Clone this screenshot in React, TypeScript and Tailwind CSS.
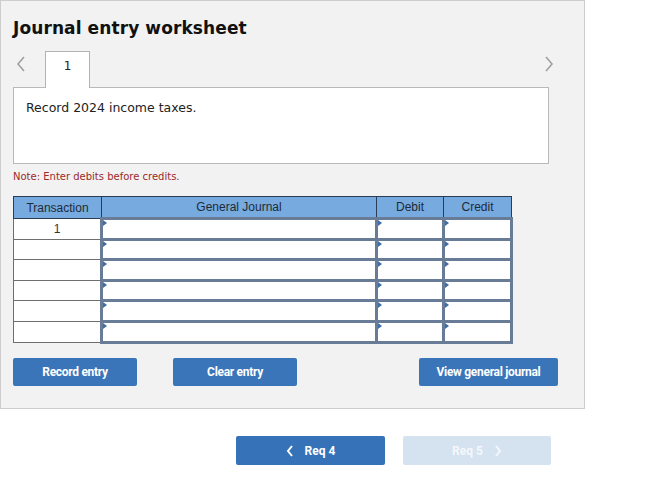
import React from 'react'

/**
 * Journal entry worksheet
 * - 분개 입력 표 + 하단 요구사항 이동 버튼
 */

const rows = ['1', '', '', '', '', '']

function Marker() {
    return (
        <span className="absolute left-0 top-0 w-0 h-0 border-y-[3px] border-y-transparent border-l-[4px] border-l-[#3d6ea8]" />
    )
}

function Chevron({ dir, className, w = 8, h = 12, sw = 2 }: { dir: 'left' | 'right'; className?: string; w?: number; h?: number; sw?: number }) {
    return (
        <svg width={w} height={h} viewBox={`0 0 ${w} ${h}`} className={className}>
            <path
                d={dir === 'left' ? `M${w - 2} 1 L2 ${h / 2} L${w - 2} ${h - 1}` : `M2 1 L${w - 2} ${h / 2} L2 ${h - 1}`}
                fill="none"
                stroke="currentColor"
                strokeWidth={sw}
            />
        </svg>
    )
}

export default function App() {
    return (
        <div className="w-[652px] h-[478px] bg-white relative font-['DejaVu_Sans',sans-serif]">
            <div className="w-[585px] h-[409px] bg-[#f2f2f2] border border-[#cdcdcd] pt-[17px] px-[12px]">
                <h1 className="text-[17px] font-bold text-[#111] leading-[20px] tracking-[0.1px]">Journal entry worksheet</h1>

                <div className="flex items-end h-[36px] mt-[13px] relative">
                    <div className="w-[32px] h-[36px] pl-[3px] pt-[5px] text-[#a0a0a0]">
                        <Chevron dir="left" w={10} h={16} sw={1.6} />
                    </div>
                    <div className="w-[45px] h-[37px] bg-white border border-[#b3b3b3] border-b-0 relative z-10 -mb-px flex justify-center pt-[5px] text-[12px] text-[#222]">
                        1
                    </div>
                    <div className="absolute right-[18px] top-[5px] text-[#a0a0a0]">
                        <Chevron dir="right" w={10} h={16} sw={1.6} />
                    </div>
                </div>

                <div className="w-[536px] h-[77px] bg-white border border-[#b9b9b9] px-[12px] pt-[11px] text-[12.5px] text-[#222]">
                    Record 2024 income taxes.
                </div>

                <p className="mt-[6px] text-[10px] text-[#9b2a2a] leading-[14px] font-['DejaVu_Sans',sans-serif]">Note: Enter debits before credits.</p>

                <table className="mt-[12px] border-collapse font-['Liberation_Sans',Arial,sans-serif] text-[12px]">
                    <thead>
                        <tr className="h-[22px] bg-[#77aadf] text-[#1e2a38]">
                            <th className="w-[88px] border border-[#2a3d56] font-normal p-0">Transaction</th>
                            <th className="w-[275px] border border-[#2a3d56] font-normal p-0">General Journal</th>
                            <th className="w-[67px] border border-[#2a3d56] font-normal p-0">Debit</th>
                            <th className="w-[68px] border border-[#2a3d56] font-normal p-0">Credit</th>
                        </tr>
                    </thead>
                    <tbody>
                        {rows.map((t, i) => (
                            <tr key={i} className="h-[20.6px]">
                                <td className="bg-white border border-[#6e6e6e] text-center text-[#333] p-0">{t}</td>
                                <td className="relative bg-white border-[3px] border-[#687c97] p-0"><Marker /></td>
                                <td className="relative bg-white border-[3px] border-[#687c97] p-0"><Marker /></td>
                                <td className="relative bg-white border-[3px] border-[#687c97] p-0"><Marker /></td>
                            </tr>
                        ))}
                    </tbody>
                </table>

                <div className="flex mt-[14px] font-['Roboto',sans-serif] text-[12px] font-bold text-white tracking-[-0.3px]">
                    <button className="w-[124px] h-[28px] bg-[#3a75ba] rounded-[2px]">Record entry</button>
                    <button className="w-[124px] h-[28px] bg-[#3a75ba] rounded-[2px] ml-[36px]">Clear entry</button>
                    <button className="w-[139px] h-[28px] bg-[#3a75ba] rounded-[2px] ml-auto mr-[14px]">View general journal</button>
                </div>
            </div>

            <div className="flex mt-[27px] ml-[236px] gap-[18px] font-['Roboto',sans-serif] text-[12px] font-bold">
                <button className="w-[149px] h-[29px] bg-[#3572b8] rounded-[2px] text-white flex items-center justify-center gap-[11px]">
                    <Chevron dir="left" />
                    <span>Req 4</span>
                </button>
                <button className="w-[148px] h-[29px] bg-[#d5e2f0] rounded-[2px] text-[#f4f7fb] flex items-center justify-center gap-[11px]">
                    <span>Req 5</span>
                    <Chevron dir="right" />
                </button>
            </div>
        </div>
    )
}
